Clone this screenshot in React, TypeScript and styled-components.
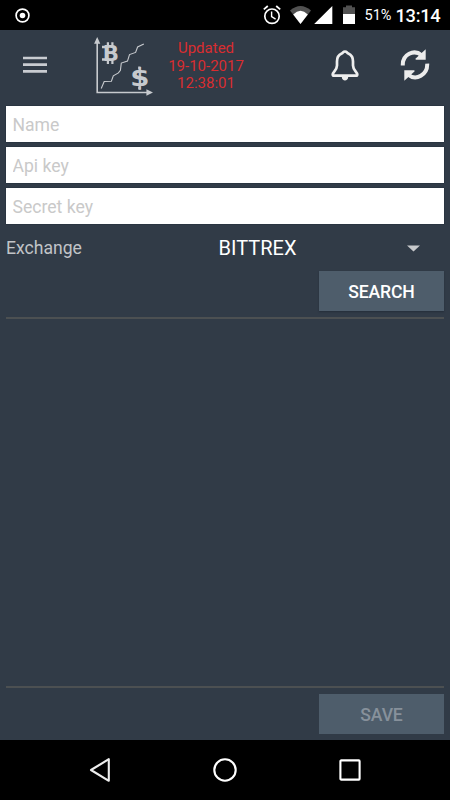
import React from "react";
import styled, { createGlobalStyle } from "styled-components";

const GlobalStyle = createGlobalStyle`
  * { box-sizing: border-box; }
  body { margin: 0; background: #313b47; }
`;

const Screen = styled.div`
  width: 450px;
  height: 800px;
  display: flex;
  flex-direction: column;
  overflow: hidden;
  background: #313b47;
  font-family: Roboto, "Liberation Sans", sans-serif;
  svg { display: block; flex: none; }
`;

const StatusBar = styled.div`
  height: 30px;
  flex: none;
  display: flex;
  align-items: center;
  padding: 0 11px 0 15px;
  background: #000;
  color: #fff;
  white-space: nowrap;
`;

const Spacer = styled.div`
  flex: 1;
`;

const Battery = styled.span`
  width: 28px;
  margin-left: 9.5px;
  font-size: 14.5px;
  line-height: 30px;
  padding-top: 2px;
`;

const Clock = styled.span`
  width: 43.5px;
  margin-left: 3px;
  font-size: 18.3px;
  font-weight: 500;
  letter-spacing: -0.3px;
  line-height: 30px;
  padding-top: 1px;
`;

const Header = styled.header`
  height: 70px;
  flex: none;
  display: grid;
  grid-template-columns: 93px 62px 102px 70px 1fr;
  align-items: center;
`;

const IconButton = styled.button<{ $left: number }>`
  border: 0;
  padding: 0 0 0 ${(p) => p.$left}px;
  background: none;
`;

const Updated = styled.div`
  text-align: center;
  color: #d92d30;
  font-size: 15px;
  line-height: 17.6px;
  padding-top: 3px;
`;

const BellCell = styled.div`
  grid-column: 4 / 6;
  display: flex;
  align-items: center;
`;

const Form = styled.main`
  flex: 1;
  display: flex;
  flex-direction: column;
  padding: 6px;
`;

const Field = styled.input`
  height: 35.5px;
  flex: none;
  margin: 0 0 5.6px;
  padding: 2px 6.5px 0;
  border: 0;
  border-radius: 0;
  outline: 0;
  background: #fff;
  box-shadow: 0 0 1px #101a27;
  font-family: inherit;
  font-size: 17.6px;
  &::placeholder { color: #c9c9c9; opacity: 1; }
`;

const ExchangeRow = styled.div`
  height: 41.7px;
  flex: none;
  display: grid;
  grid-template-columns: 212.6px 188.4px 1fr;
  align-items: center;
  padding-bottom: 4px;
`;

const Label = styled.label`
  color: #c1c4c8;
  font-size: 17.6px;
`;

const Exchange = styled.span`
  color: #fff;
  font-size: 20px;
`;

const Action = styled.button`
  width: 125px;
  height: 40px;
  flex: none;
  align-self: flex-end;
  border: 0;
  padding: 2px 0 0;
  background: #4e5d6b;
  color: #fff;
  box-shadow: 0 1px 1.5px #252f3a;
  font-family: inherit;
  font-size: 17.6px;
  letter-spacing: -0.15px;
  font-weight: 500;
  &:disabled { color: #87919b; box-shadow: none; }
`;

const Divider = styled.div`
  height: 2px;
  flex: none;
  margin: 6px 0;
  background: #4c5052;
`;

const NavBar = styled.nav`
  height: 60px;
  flex: none;
  display: flex;
  align-items: center;
  justify-content: space-between;
  padding: 0 87px;
  background: #000;
`;

const Target = () => (
  <svg width="15" height="15" viewBox="0 0 15 15">
    <circle cx="7.5" cy="7.5" r="6.4" fill="none" stroke="#fff" strokeWidth="1.7" />
    <circle cx="7.5" cy="7.5" r="2.8" fill="#fff" />
  </svg>
);

const StatusIcons = () => (
  <svg width="92" height="22" viewBox="0 0 92 22">
    <g fill="none" stroke="#fff" strokeWidth="1.7">
      <circle cx="9" cy="12.2" r="7.2" />
      <path d="M.8 5.4 4.8 2M17.2 5.4 13.2 2" strokeWidth="1.8" />
      <path d="M8.6 7.6v5l4 2.5" strokeWidth="1.4" />
    </g>
    <path d="M27 6.4Q37.5-2.6 48 6.4L37.5 20z" fill="#515151" />
    <path d="M30.2 10.4Q37.5 3.2 44.8 10.4L37.5 20z" fill="#fff" />
    <path d="M51.2 20 69.3 2v18z" fill="#fff" />
    <path d="M80 3.3h3V1.6h6v1.7h3V11H80z" fill="#515151" />
    <path d="M80 10h12v10H80z" fill="#fff" />
  </svg>
);

const Menu = () => (
  <svg width="24" height="18" viewBox="0 0 24 18">
    <path d="M0 2h24M0 8.7h24M0 15.4h24" stroke="#c9ccd1" strokeWidth="2.7" />
  </svg>
);

const Logo = () => (
  <svg width="62" height="62" viewBox="0 0 62 62">
    <g fill="none" stroke="#c7cace">
      <path d="M4.2 5v53.5H55" strokeWidth="1.6" />
      <path d="m8.2 54.5 3-7 7.2-.2 1.9-5.4 5.1-3 2-2.6.9-7.2 6.2-2 2-6.5 6.1-2.2 2-5.4 6.2-3" strokeWidth="1.1" />
    </g>
    <path d="M4.2 3 7.3 9.7H1.1zM60 58.5l-6.6-3.3v6.6z" fill="#c7cace" />
    <g fill="#c7cace" fontFamily="DejaVu Sans, sans-serif" fontWeight="700">
      <text transform="translate(9.7 26.7) scale(1.04 1)" fontSize="20.5">B</text>
      <path d="M9 11.8h5v2.4H9zm0 12.5h5v2.4H9z" />
      <path d="M13.8 8.3h2.2v4h-2.2zm4.5 0h2.2v4h-2.2zM13.8 26h2.2v4.1h-2.2zm4.5 0h2.2v4.1h-2.2z" />
      <text transform="translate(37.2 51.6) scale(1.15 1)" fontSize="24">$</text>
      <path d="M45.2 32.4h2.4v3h-2.4zm0 20h2.4v3h-2.4z" />
    </g>
  </svg>
);

const Bell = () => (
  <svg width="28" height="32" viewBox="0 0 28 32">
    <path d="M14 2.5c-2 0-1.7 1.4-3.3 2C7.2 6 6 9 6 12.4v4.1c0 4.7-4.3 6.3-4.3 9 0 .8.6 1.2 1.4 1.2h21.8c.8 0 1.4-.4 1.4-1.2 0-2.7-4.3-4.3-4.3-9v-4.1c0-3.4-1.2-6.4-4.7-7.9-1.6-.6-1.3-2-3.3-2z" fill="none" stroke="#eee" strokeWidth="2.7" strokeLinejoin="round" />
    <path d="M10.8 28h6.4c0 4.5-6.4 4.5-6.4 0z" fill="#eee" />
  </svg>
);

const Refresh = () => (
  <svg width="30" height="34" viewBox="0 0 30 34">
    <g fill="none" stroke="#ececec" strokeWidth="4">
      <path d="M2.8 17.5C2.3 6.5 14 .7 21.6 7.3" />
      <path d="M27.2 15.7C27.7 26.7 16 33.3 8.4 26.7" />
    </g>
    <path d="M25.7 1.2v10.6H15.8l-.4-1zM4.3 32.8V22.2h10l.4 1z" fill="#ececec" />
  </svg>
);

const Caret = () => (
  <svg width="13" height="7" viewBox="0 0 13 7">
    <path d="M0 .5h13l-6.5 6z" fill="#c7c9cc" />
  </svg>
);

const Back = () => (
  <svg width="26" height="26" viewBox="0 0 26 26">
    <path d="M21.8 2.2v21.6L4 13z" fill="none" stroke="#eee" strokeWidth="2.1" strokeLinejoin="round" />
  </svg>
);

const Home = () => (
  <svg width="26" height="26" viewBox="0 0 26 26">
    <circle cx="13" cy="13" r="10.7" fill="none" stroke="#fff" strokeWidth="2.1" />
  </svg>
);

const Recents = () => (
  <svg width="26" height="26" viewBox="0 0 26 26">
    <rect x="3.4" y="3.4" width="19.2" height="19.2" rx=".8" fill="none" stroke="#fff" strokeWidth="2.1" />
  </svg>
);

export default function App() {
  return (
    <Screen>
      <GlobalStyle />
      <StatusBar>
        <Target />
        <Spacer />
        <StatusIcons />
        <Battery>51%</Battery>
        <Clock>13:14</Clock>
      </StatusBar>
      <Header>
        <IconButton $left={23} aria-label="Menu"><Menu /></IconButton>
        <Logo />
        <Updated>Updated<br />19-10-2017<br />12:38:01</Updated>
        <BellCell>
          <IconButton $left={74} aria-label="Alerts"><Bell /></IconButton>
          <IconButton $left={41} aria-label="Refresh"><Refresh /></IconButton>
        </BellCell>
      </Header>
      <Form>
        <Field placeholder="Name" />
        <Field placeholder="Api key" />
        <Field placeholder="Secret key" />
        <ExchangeRow>
          <Label>Exchange</Label>
          <Exchange>BITTREX</Exchange>
          <Caret />
        </ExchangeRow>
        <Action>SEARCH</Action>
        <Divider />
        <Spacer />
        <Divider />
        <Action disabled>SAVE</Action>
      </Form>
      <NavBar>
        <Back />
        <Home />
        <Recents />
      </NavBar>
    </Screen>
  );
}
